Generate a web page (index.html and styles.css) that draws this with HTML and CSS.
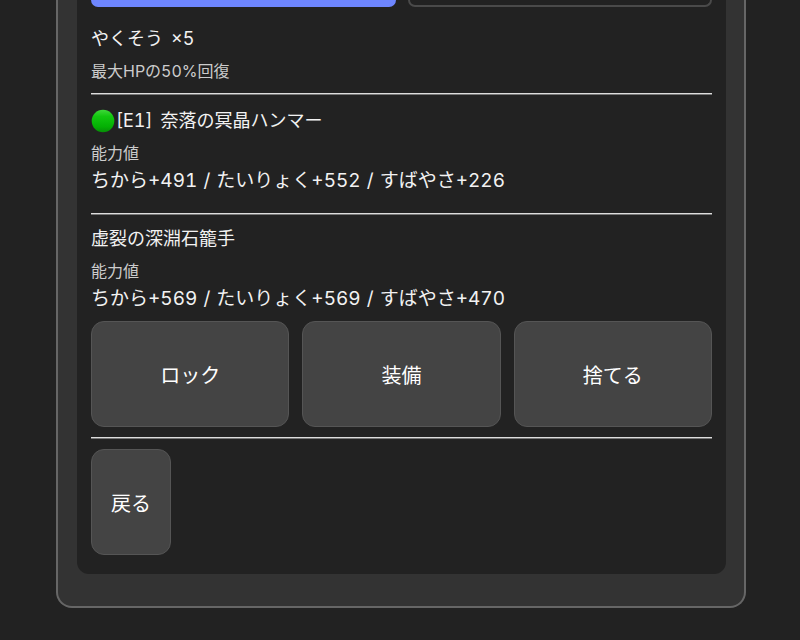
FILE: index.html
```html
<!DOCTYPE html>
<html lang="ja">
<head>
  <meta charset="UTF-8" />
  <meta name="viewport" content="width=device-width, initial-scale=1.0"/>
  <title>もちもの</title>
  <link rel="stylesheet" href="styles.css">
</head>
<body>
  <div class="container">
    <div class="panel">
      <div class="tabs">
        <button class="tab active" aria-label="もちもの"></button>
        <button class="tab" aria-label="そうび"></button>
      </div>

      <div class="item">
        <div class="item-name">やくそう<span class="count">×5</span></div>
        <div class="item-note">最大HPの50%回復</div>
      </div>
      <hr/>

      <div class="item equipped">
        <div class="item-name">
          <svg class="mark" viewBox="0 0 24 24" aria-hidden="true">
            <defs>
              <linearGradient id="green" x1="0" y1="0" x2="0" y2="1">
                <stop offset="0" stop-color="#3fd83a"/>
                <stop offset="0.3" stop-color="#12c70f"/>
                <stop offset="0.75" stop-color="#04b004"/>
                <stop offset="1" stop-color="#078d07"/>
              </linearGradient>
            </defs>
            <circle cx="12" cy="12" r="11.3" fill="url(#green)"/>
          </svg>
          <span><span class="slot">[E1]</span> 奈落の冥晶ハンマー</span>
        </div>
        <div class="item-note">能力値</div>
        <div class="item-stats">ちから+491 <span class="sep">/</span> たいりょく+552 <span class="sep">/</span> すばやさ+226</div>
      </div>
      <hr/>

      <div class="item">
        <div class="item-name">虚裂の深淵石籠手</div>
        <div class="item-note">能力値</div>
        <div class="item-stats">ちから+569 <span class="sep">/</span> たいりょく+569 <span class="sep">/</span> すばやさ+470</div>
        <div class="actions">
          <button>ロック</button>
          <button>装備</button>
          <button>捨てる</button>
        </div>
      </div>
      <hr/>

      <button class="back-button">戻る</button>
    </div>
  </div>
</body>
</html>
```

FILE: styles.css
```css
* {
  box-sizing: border-box;
}
body {
  margin: 0;
  background-color: #222;
  color: #f2f2f2;
  font-family: Inter, "Noto Sans CJK JP", sans-serif;
  font-size: 19px;
  font-variant-numeric: tabular-nums;
}
.container {
  margin: 0 54px 32px 56px;
  padding: 0 18px 32px 19px;
  background-color: #333;
  border: 2px solid #666;
  border-top: none;
  border-radius: 0 0 16px 16px;
}
.panel {
  padding: 0 14px 19px;
  background-color: #222;
  border-radius: 0 0 12px 12px;
}
.tabs {
  display: flex;
  gap: 12px;
  margin-bottom: 18px;
}
.tab {
  flex: 1;
  height: 7px;
  min-height: 0;
  padding: 0;
  background-color: #222;
  border: 2px solid #4a4a4a;
  border-top: none;
  border-radius: 0 0 12px 12px;
}
.tab.active {
  background-color: #6e86ff;
  border-color: #6e86ff;
}
.item-name {
  display: flex;
  align-items: center;
  font-size: 18px;
  line-height: 28px;
}
.count {
  margin-left: 8px;
}
.mark {
  width: 24px;
  height: 24px;
  margin-right: 1px;
}
.slot {
  margin-right: 3px;
}
.item-note {
  margin-top: 6px;
  font-size: 16px;
  line-height: 24px;
  color: #ccc;
}
.item-stats {
  line-height: 32px;
}
.sep {
  margin: 0 1px;
}
.item.equipped {
  padding: 2px 0 6px;
}
hr {
  height: 2px;
  margin: 10px 0;
  border: none;
  border-top: 1px solid #ddd;
  border-bottom: 1px solid #777;
}
.actions {
  display: grid;
  grid-template-columns: repeat(3, 1fr);
  gap: 13px;
  margin-top: 6px;
}
button {
  min-height: 106px;
  padding: 0 19px;
  background-color: #444;
  color: #fff;
  border: 1px solid #555;
  border-radius: 13px;
  font-family: inherit;
  font-size: 20px;
  cursor: pointer;
}
.back-button {
  display: block;
}
```
